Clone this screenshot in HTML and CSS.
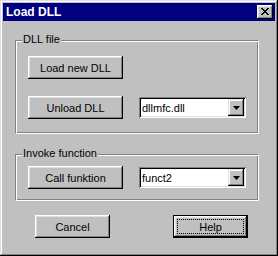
FILE: index.html
```html
<!DOCTYPE html>
<html>
<head>
<meta name="viewport" content="width=device-width, initial-scale=1">
<link rel="stylesheet" href="styles.css">
</head>
<body>

<div class="window">
  <div class="titlebar">
    <span class="title">Load DLL</span>
    <button type="button" class="close-btn">
      <svg width="8" height="7" viewBox="0 0 8 7"><path d="M0 0h2v1h-2zM6 0h2v1h-2zM1 1h2v1h-2zM5 1h2v1h-2zM2 2h4v1h-4zM3 3h2v1h-2zM2 4h4v1h-4zM1 5h2v1h-2zM5 5h2v1h-2zM0 6h2v1h-2zM6 6h2v1h-2z" fill="#000"/></svg>
    </button>
  </div>

  <div class="client">
    <div class="group group-dll">
      <span class="group-label">DLL file</span>
      <div class="row">
        <button type="button" class="btn wide">Load new DLL</button>
      </div>
      <div class="row">
        <button type="button" class="btn wide">Unload DLL</button>
        <div class="combo">
          <span class="combo-text">dllmfc.dll</span>
          <span class="combo-arrow">
            <svg width="7" height="4" viewBox="0 0 7 4"><path d="M0 0h7l-3.5 4z" fill="#000"/></svg>
          </span>
        </div>
      </div>
    </div>

    <div class="group group-invoke">
      <span class="group-label">Invoke function</span>
      <div class="row">
        <button type="button" class="btn wide">Call funktion</button>
        <div class="combo">
          <span class="combo-text">funct2</span>
          <span class="combo-arrow">
            <svg width="7" height="4" viewBox="0 0 7 4"><path d="M0 0h7l-3.5 4z" fill="#000"/></svg>
          </span>
        </div>
      </div>
    </div>

    <div class="actions">
      <button type="button" class="btn small">Cancel</button>
      <button type="button" class="btn small default"><span class="focus">Help</span></button>
    </div>
  </div>
</div>

</body>
</html>
```

FILE: styles.css
```css
body {
    margin: 0;
    font-family: "Liberation Sans", Arial, sans-serif;
    font-size: 11px;
    background-color: #c0c0c0;
}

.window {
    width: 278px;
    height: 256px;
    box-sizing: border-box;
    padding: 3px;
    background-color: #c0c0c0;
    box-shadow: inset -1px -1px #000, inset 1px 1px #dfdfdf, inset -2px -2px #808080, inset 2px 2px #fff;
}

.titlebar {
    height: 18px;
    background-color: #000080;
    color: #fff;
    display: flex;
    align-items: center;
    justify-content: space-between;
    padding: 0 2px 0 3px;
}

.title {
    font-weight: bold;
    font-size: 12px;
}

.close-btn {
    width: 16px;
    height: 14px;
    padding: 0;
    border: none;
    background-color: #c0c0c0;
    box-shadow: inset -1px -1px #000, inset 1px 1px #fff, inset -2px -2px #808080, inset 2px 2px #dfdfdf;
    display: flex;
    align-items: center;
    justify-content: center;
    padding-bottom: 1px;
}

.client {
    padding: 19px 0 0 12px;
}

.group {
    position: relative;
    width: 244px;
    box-sizing: border-box;
    border: 1px solid #808080;
    border-right-color: #fff;
    border-bottom-color: #fff;
    box-shadow: inset 1px 1px #fff, inset -1px -1px #808080;
    padding: 2px 12px 0 12px;
}

.group-label {
    position: absolute;
    top: -8px;
    left: 6px;
    padding: 0 1px;
    background-color: #c0c0c0;
    color: #000;
}

.group-dll {
    height: 94px;
    padding-top: 15px;
}

.group-invoke {
    margin-top: 20px;
    height: 47px;
    padding-top: 11px;
}

.row {
    display: flex;
    align-items: center;
    height: 23px;
}

.row + .row {
    margin-top: 17px;
}

.btn {
    height: 23px;
    padding: 0;
    border: none;
    background-color: #c0c0c0;
    font-family: "Liberation Sans", Arial, sans-serif;
    font-size: 11px;
    color: #000;
    box-shadow: inset -1px -1px #000, inset 1px 1px #fff, inset -2px -2px #808080, inset 2px 2px #dfdfdf;
}

.wide {
    width: 95px;
}

.small {
    width: 75px;
}

.combo {
    margin-left: 16px;
    width: 107px;
    height: 21px;
    box-sizing: border-box;
    background-color: #fff;
    box-shadow: inset 1px 1px #808080, inset -1px -1px #fff, inset 2px 2px #000, inset -2px -2px #dfdfdf;
    display: flex;
    align-items: center;
    justify-content: space-between;
    padding: 2px;
}

.combo-text {
    padding-left: 1px;
}

.combo-arrow {
    width: 16px;
    height: 17px;
    background-color: #c0c0c0;
    box-shadow: inset -1px -1px #000, inset 1px 1px #dfdfdf, inset -2px -2px #808080, inset 2px 2px #fff;
    display: flex;
    align-items: center;
    justify-content: center;
}

.actions {
    display: flex;
    margin-top: 14px;
    padding-left: 20px;
    gap: 63px;
}

.default {
    box-shadow: inset 0 0 0 1px #000, inset -2px -2px #000, inset 2px 2px #fff, inset -3px -3px #808080, inset 3px 3px #dfdfdf;
    padding: 4px;
}

.focus {
    display: flex;
    align-items: center;
    justify-content: center;
    height: 100%;
    box-sizing: border-box;
    outline: 1px dotted #000;
    outline-offset: -1px;
}
```
